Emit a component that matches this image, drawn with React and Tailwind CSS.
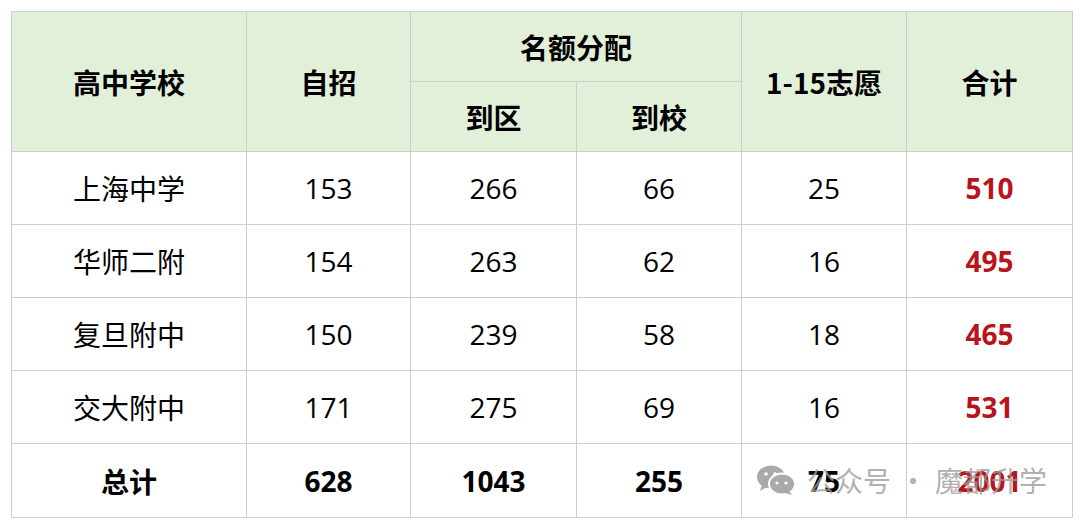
import React from "react";

const rows = [
  ["上海中学", "153", "266", "66", "25", "510"],
  ["华师二附", "154", "263", "62", "16", "495"],
  ["复旦附中", "150", "239", "58", "18", "465"],
  ["交大附中", "171", "275", "69", "16", "531"],
];

const cell = "border border-[#cdcdcd] text-center align-middle p-0";
const cjk = { fontFamily: '"Noto Sans CJK SC", sans-serif' };

function WeChatIcon() {
  return (
    <svg width="40" height="30" viewBox="0 0 40 30">
      <ellipse cx="15" cy="12" rx="14" ry="11.5" fill="#a9a9a9" />
      <path d="M6 20 L4 26 L11 22 Z" fill="#a9a9a9" />
      <ellipse cx="26" cy="19" rx="13" ry="10.5" fill="#a9a9a9" stroke="#ffffff" strokeWidth="2" />
      <path d="M33 26 L36 30 L29 28 Z" fill="#a9a9a9" />
      <circle cx="10" cy="9" r="1.8" fill="#fff" />
      <circle cx="19" cy="9" r="1.8" fill="#fff" />
      <circle cx="21" cy="18" r="1.6" fill="#fff" />
      <circle cx="30" cy="18" r="1.6" fill="#fff" />
    </svg>
  );
}

export default function App() {
  return (
    <div
      className="w-[1080px] h-[529px] bg-white pt-[11px] pl-[11px] relative overflow-hidden"
      style={{ fontFamily: '"Open Sans", "Noto Sans CJK SC", sans-serif' }}
    >
      <table className="border-collapse w-[1061px] border border-[#a0a0a0] text-[28px] text-black table-fixed">
        <colgroup>
          <col className="w-[235px]" />
          <col className="w-[164px]" />
          <col className="w-[166px]" />
          <col className="w-[165px]" />
          <col className="w-[165px]" />
          <col className="w-[166px]" />
        </colgroup>
        <thead className="bg-[#e2efd9] font-bold" style={cjk}>
          <tr className="h-[70px]">
            <th rowSpan={2} className={cell + " text-[28px]"}>高中学校</th>
            <th rowSpan={2} className={cell + " text-[28px]"}>自招</th>
            <th colSpan={2} className={cell + " text-[28px]"}>名额分配</th>
            <th rowSpan={2} className={cell + " text-[28px]"}>1-15志愿</th>
            <th rowSpan={2} className={cell + " text-[28px]"}>合计</th>
          </tr>
          <tr className="h-[70px]">
            <th className={cell + " text-[28px]"}>到区</th>
            <th className={cell + " text-[28px]"}>到校</th>
          </tr>
        </thead>
        <tbody>
          {rows.map((r) => (
            <tr key={r[0]} className="h-[73px]">
              <td className={cell} style={cjk}>{r[0]}</td>
              <td className={cell}>{r[1]}</td>
              <td className={cell}>{r[2]}</td>
              <td className={cell}>{r[3]}</td>
              <td className={cell}>{r[4]}</td>
              <td className={cell + " font-bold text-[#b8141c]"}>{r[5]}</td>
            </tr>
          ))}
          <tr className="h-[74px] font-bold">
            <td className={cell} style={cjk}>总计</td>
            <td className={cell}>628</td>
            <td className={cell}>1043</td>
            <td className={cell}>255</td>
            <td className={cell}>75</td>
            <td className={cell + " text-[#b8141c]"}>2001</td>
          </tr>
        </tbody>
      </table>
      <div
        className="absolute left-[756px] top-[465px] flex items-center text-[28px] text-[#9a9a9a]/80 leading-none pointer-events-none"
        style={cjk}
      >
        <WeChatIcon />
        <span className="ml-[11px]">公众号</span>
        <span className="mx-[8px]">·</span>
        <span>魔都升学</span>
      </div>
    </div>
  );
}
